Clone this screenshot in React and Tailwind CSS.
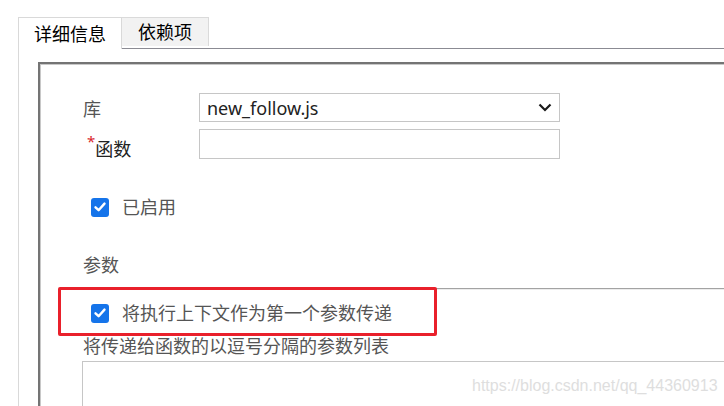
import React from "react";

const font = { fontFamily: "'Noto Sans', 'Noto Sans CJK SC', sans-serif" };

function Check() {
  return (
    <div className="w-[18px] h-[19px] rounded-[3px] bg-[#1574ea] flex items-center justify-center shrink-0">
      <svg width="14" height="14" viewBox="0 0 14 14">
        <path d="M2.5 7.3 L5.6 10.2 L11.5 3.6" fill="none" stroke="#fff" strokeWidth="2.4" strokeLinecap="round" strokeLinejoin="round" />
      </svg>
    </div>
  );
}

export default function App() {
  return (
    <div className="relative w-[724px] h-[406px] overflow-hidden bg-white" style={font}>
      <div className="pl-[18px] pt-[17px] w-[900px]">
        {/* tabs */}
        <div className="flex items-start">
          <div className="w-[104px] h-[32px] border border-b-0 border-[#d9d9d9] bg-white flex items-center justify-center text-[18px] leading-[24px] text-black">
            详细信息
          </div>
          <div className="flex-1 h-[32px] border-b border-[#8b8b93]">
            <div className="w-[87px] h-[29px] bg-[#f2f2f2] border-t border-r border-[#dadada] flex items-center justify-center text-[18px] leading-[24px] text-black">
              依赖项
            </div>
          </div>
        </div>
        {/* tab panel */}
        <div className="border-l border-[#d9d9d9] pl-[19px] pt-[13px] h-[400px]">
          <div className="border-t-2 border-l-2 border-[#747474] h-full">
            <div className="border-t border-l border-[#c8c8c8] h-full flex flex-col">
              <div className="h-[28px]" />
              {/* row 1 */}
              <div className="flex h-[29px]">
                <div className="ml-[42px] w-[116px] pt-[4px] text-[18px] leading-[24px] text-[#555]">库</div>
                <div className="w-[361px] h-[29px] border border-[#c6c6c6] flex items-center justify-between pl-[7px] pr-[7px]">
                  <span className="text-[18px] leading-[24px] text-[#222]">new_follow.js</span>
                  <svg width="14" height="9" viewBox="0 0 14 9">
                    <path d="M1.5 1.5 L7 7 L12.5 1.5" fill="none" stroke="#1a1a1a" strokeWidth="2.2" />
                  </svg>
                </div>
              </div>
              {/* row 2 */}
              <div className="flex h-[30px] mt-[7px]">
                <div className="ml-[42px] w-[116px] pt-[8px] text-[18px] leading-[24px] text-[#222] flex">
                  <span className="ml-[4px] text-[#d9262c] text-[15px] leading-[15px] -mt-[3px]">*</span>
                  <span>函数</span>
                </div>
                <div className="w-[361px] h-[30px] border border-[#c6c6c6]" />
              </div>
              {/* enabled */}
              <div className="mt-[38px] h-[20px] flex items-center ml-[50px] gap-[13px]">
                <Check />
                <span className="text-[18px] leading-[24px] text-[#555]">已启用</span>
              </div>
              {/* params */}
              <div className="mt-[36px] h-[24px] ml-[42px] text-[18px] leading-[24px] text-[#555]">参数</div>
              <div className="mt-[11px] ml-[19px] h-[2px] border-t border-[#a3a3a3] border-b border-b-[#ececec]" />
              <div className="mt-[13px] h-[20px] flex items-center ml-[50px] gap-[13px]">
                <Check />
                <span className="text-[18px] leading-[24px] text-[#555]">将执行上下文作为第一个参数传递</span>
              </div>
              <div className="mt-[11px] h-[24px] ml-[42px] text-[18px] leading-[24px] text-[#555]">
                将传递给函数的以逗号分隔的参数列表
              </div>
              <div className="mt-[3px] ml-[41px] h-[80px] border border-[#c6c6c6]" />
            </div>
          </div>
        </div>
      </div>
      {/* annotation box */}
      <div className="absolute left-[58px] top-[287px] w-[379px] h-[49px] border-[3px] border-[#e9202b] rounded-[2px]" />
      {/* watermark */}
      <div
        className="absolute left-[472px] top-[376px] text-[16px] leading-[20px] text-[#dedede]"
        style={{ fontFamily: "'Liberation Sans', Arial, sans-serif" }}
      >
        https://blog.csdn.net/qq_44360913
      </div>
    </div>
  );
}
